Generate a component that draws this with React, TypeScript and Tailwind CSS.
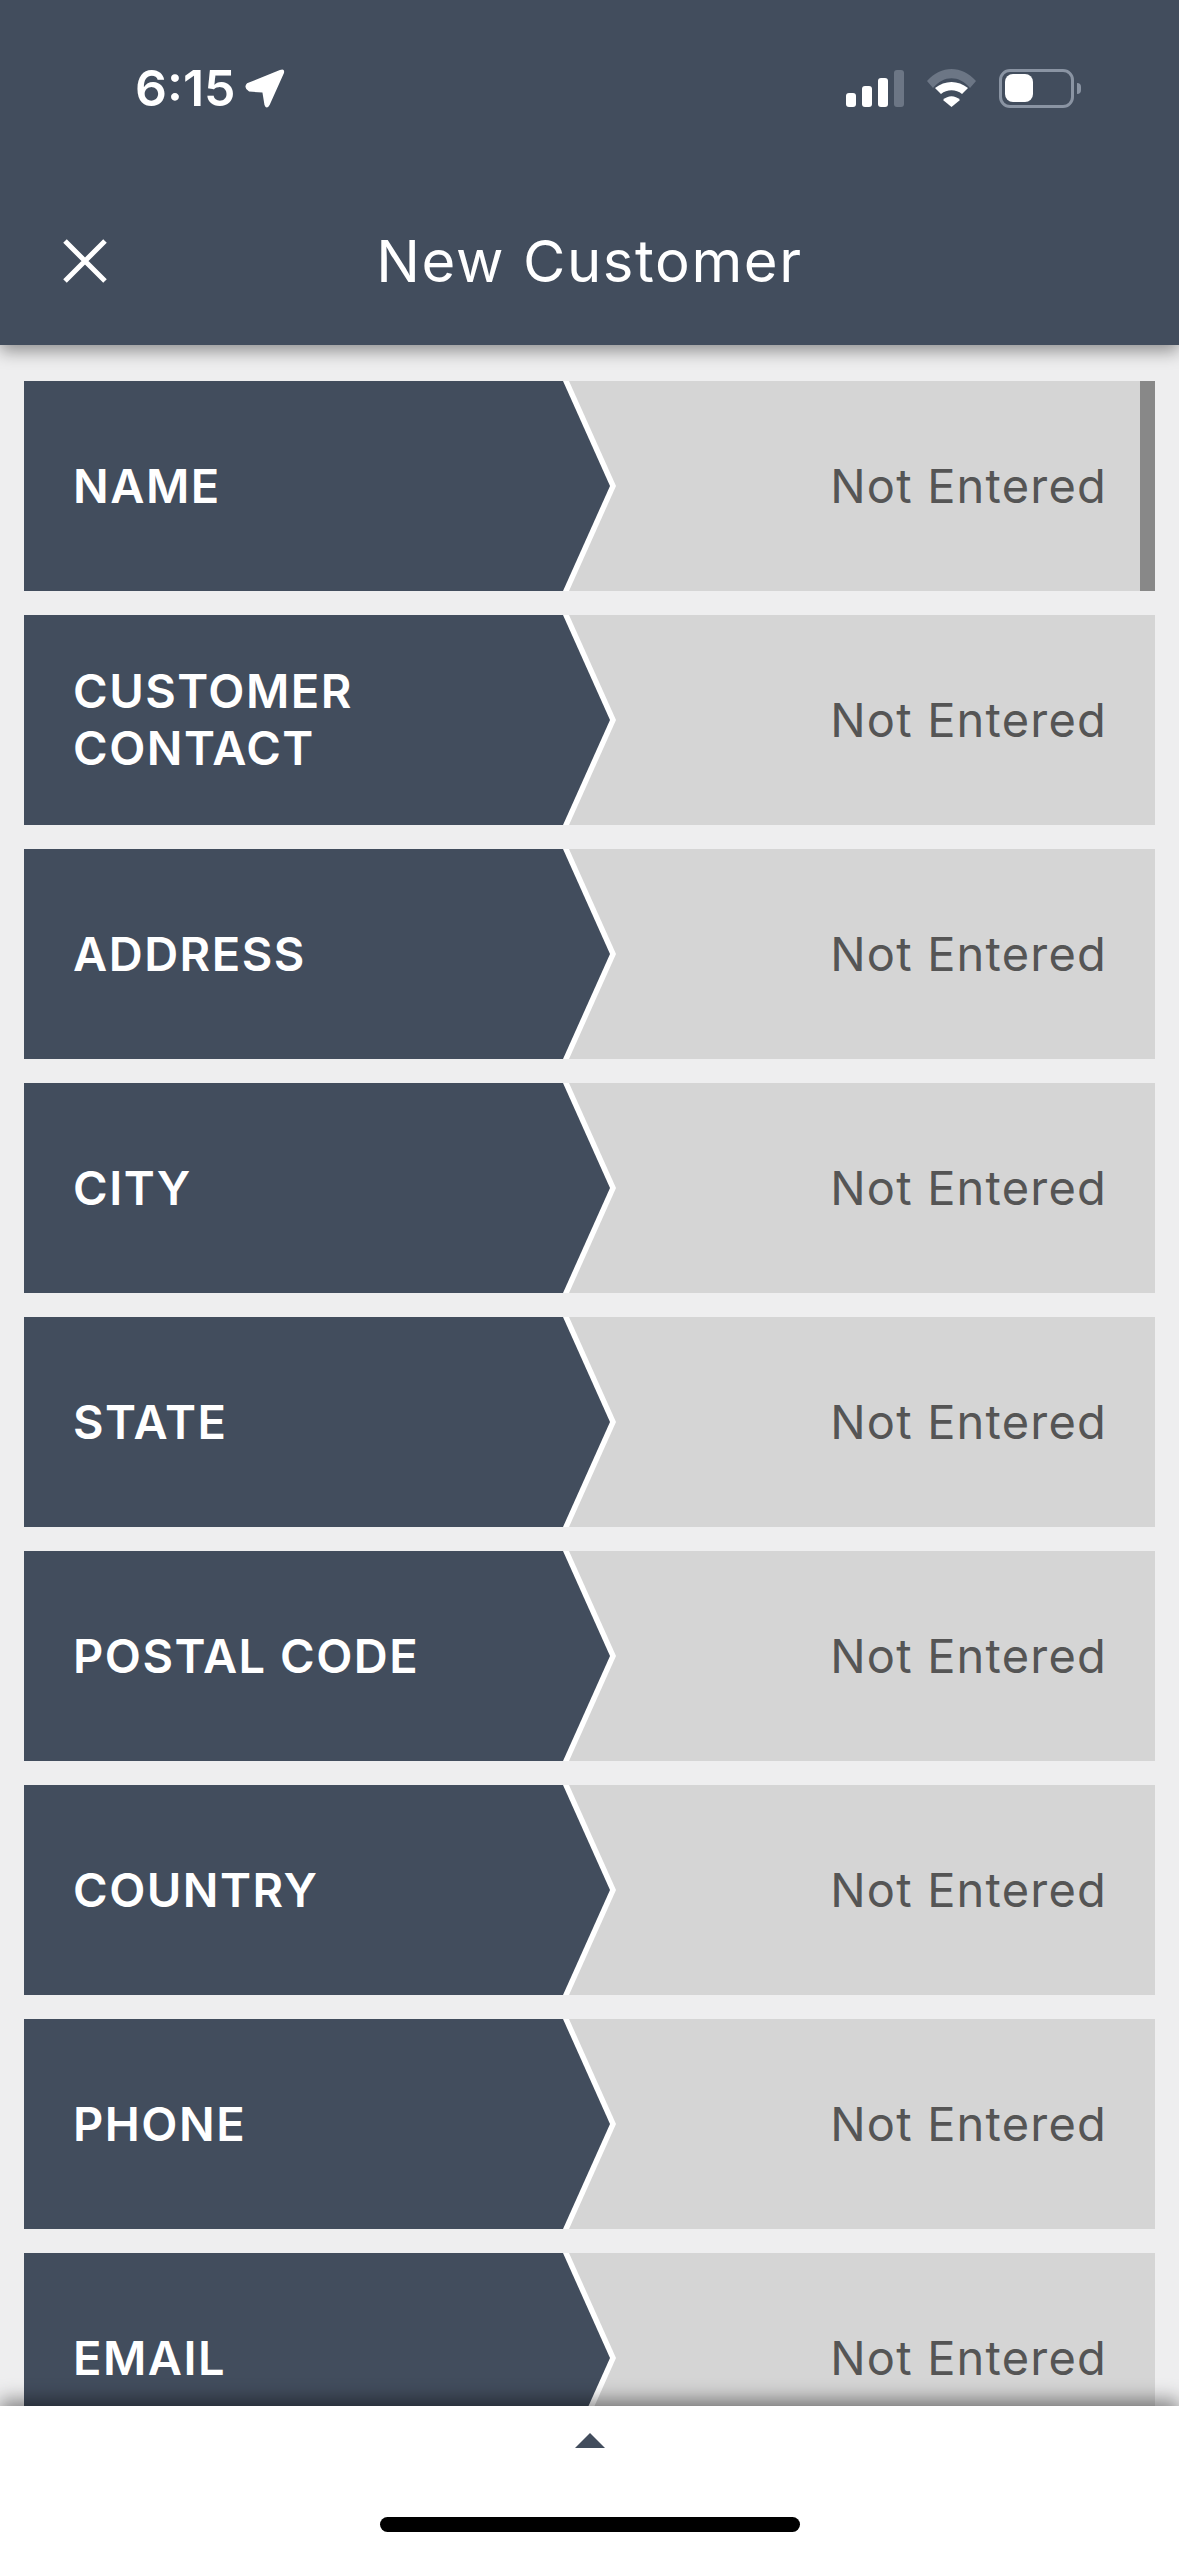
const fields = [
  { label: ['NAME'], scroll: true },
  { label: ['CUSTOMER', 'CONTACT'] },
  { label: ['ADDRESS'] },
  { label: ['CITY'] },
  { label: ['STATE'] },
  { label: ['POSTAL CODE'] },
  { label: ['COUNTRY'] },
  { label: ['PHONE'] },
  { label: ['EMAIL'] },
]

function StatusBar() {
  return (
    <div className="mt-[68px] flex h-[40px] items-center justify-between pl-[135px] pr-[98px]">
      <div className="flex items-center gap-[9px]">
        <span className="text-[50px] leading-[40px] font-semibold text-white">6:15</span>
        <svg width="40" height="39" viewBox="0 0 39 38" fill="#fff">
          <path d="M2 14 L34 1 Q39 -1 38 4 L24 35 Q21 40 19 35 L17 23 L4 22 Q-2 18 2 14 Z" />
        </svg>
      </div>
      <div className="flex items-center gap-[23px]">
        <div className="flex h-[38px] items-end gap-[6px]">
          <div className="h-[14px] w-[10px] rounded-[3px] bg-white" />
          <div className="h-[21px] w-[10px] rounded-[3px] bg-white" />
          <div className="h-[29px] w-[10px] rounded-[3px] bg-white" />
          <div className="h-[37px] w-[10px] rounded-[3px] bg-[#6c7685]" />
        </div>
        <svg width="49" height="38" viewBox="0 0 49 38">
          <path d="M0 12 C14 -4 35 -4 49 12 L43 19 C32 6 17 6 6 19 Z" fill="#6c7685" />
          <path d="M8 19 C18 11 31 11 41 19 L35 25 C29 20 20 20 14 25 Z" fill="#fff" />
          <path d="M16 31 C21 26 28 26 33 31 L24.5 38 Z" fill="#fff" />
        </svg>
        <div className="flex items-center gap-[3px]">
          <div className="flex h-[39px] w-[75px] items-center rounded-[11px] border-[3px] border-[#8a94a3] pl-[3px]">
            <div className="h-[28px] w-[28px] rounded-[8px] bg-white" />
          </div>
          <div className="h-[11px] w-[4px] rounded-r-full bg-[#8a94a3]" />
        </div>
      </div>
    </div>
  )
}

function Row({ label, scroll }: { label: string[]; scroll?: boolean }) {
  return (
    <div className="relative flex h-[210px] shrink-0 items-center justify-end bg-[#d5d5d5] pr-[48px]">
      <div className="absolute inset-y-0 left-0 w-[592px] bg-white [clip-path:polygon(545px_0,100%_50%,545px_100%,0_100%,0_0)]">
        <div className="flex h-full w-[586px] flex-col justify-center bg-[#424d5d] pb-[2px] pl-[49px] [clip-path:polygon(0_0,539px_0,100%_50%,539px_100%,0_100%)]">
          {label.map((line) => (
            <div key={line} className="text-[47px] leading-[57px] font-semibold tracking-[1.5px] text-white">
              {line}
            </div>
          ))}
        </div>
      </div>
      <span className="text-[47px] tracking-[1.2px] text-[#555555]">Not Entered</span>
      {scroll && <div className="absolute inset-y-0 right-0 w-[15px] bg-[#888888]" />}
    </div>
  )
}

export default function App() {
  return (
    <div className="flex h-[2556px] w-[1179px] flex-col overflow-hidden bg-[#eeeeef] font-['Inter',sans-serif]">
      <header className="relative z-10 h-[345px] shrink-0 bg-[#424d5d] shadow-[0_6px_16px_rgba(0,0,0,0.4)]">
        <StatusBar />
        <div className="relative mt-[123px] flex h-[60px] items-center justify-center">
          <svg className="absolute left-[62px] top-[7px]" width="46" height="46" viewBox="0 0 46 46" fill="none" stroke="#fff" strokeWidth="5">
            <path d="M3 3 L43 43 M43 3 L3 43" />
          </svg>
          <h1 className="text-[58px] font-normal tracking-[1.6px] text-white">New Customer</h1>
        </div>
      </header>
      <main className="flex min-h-0 flex-1 flex-col gap-[24px] overflow-hidden px-[24px] pt-[36px]">
        {fields.map((f) => (
          <Row key={f.label[0]} label={f.label} scroll={f.scroll} />
        ))}
      </main>
      <footer className="relative z-10 flex h-[150px] shrink-0 flex-col items-center bg-white pt-[27px] shadow-[0_-6px_18px_rgba(0,0,0,0.45)]">
        <svg width="30" height="15" viewBox="0 0 30 15" fill="#424d5d">
          <path d="M15 0 L30 15 L0 15 Z" />
        </svg>
        <div className="mt-[69px] h-[15px] w-[420px] rounded-full bg-black" />
      </footer>
    </div>
  )
}
